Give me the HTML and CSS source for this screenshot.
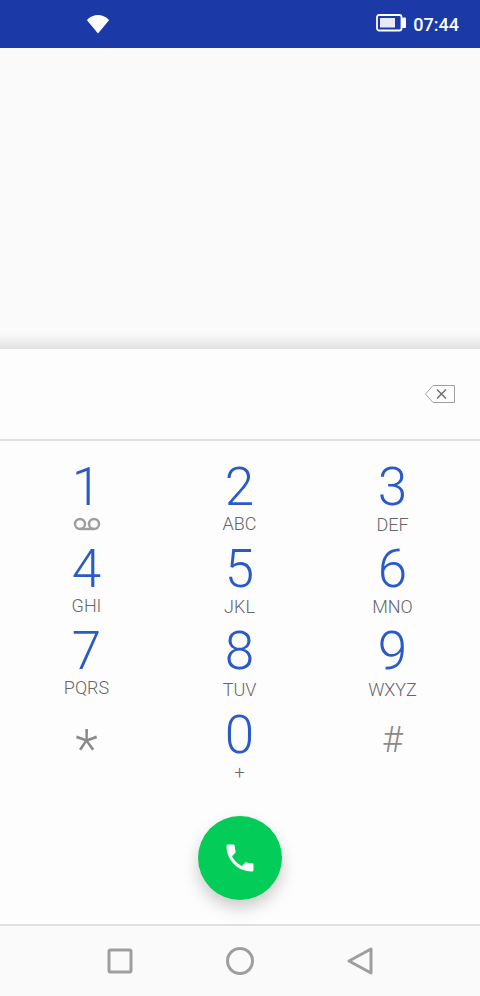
FILE: index.html
```html
<!DOCTYPE html>
<html lang="en">
  <head>
    <meta charset="UTF-8" />
    <meta name="viewport" content="width=device-width, initial-scale=1.0" />
    <title>Phone</title>
    <link rel="stylesheet" href="styles.css">
  </head>
  <body>
    <div class="screen">
      <div class="status-bar">
        <svg class="wifi" width="24" height="20" viewBox="0 0 24 20">
          <path d="M12 19.5 L1.2 6.6 Q1 6 1.4 5.6 Q6 1 12 1 Q18 1 22.6 5.6 Q23 6 22.8 6.6 Z" fill="#fff" />
        </svg>
        <div class="status-right">
          <svg class="battery" width="30" height="18" viewBox="0 0 30 18">
            <rect x="1" y="1" width="24.5" height="15.5" rx="2" fill="none" stroke="#fff" stroke-width="1.8" />
            <rect x="4" y="4" width="15" height="9.5" fill="#e8ebf6" />
            <rect x="26" y="3.5" width="4" height="10.5" rx="1" fill="#fff" />
          </svg>
          <span class="clock">07:44</span>
        </div>
      </div>

      <div class="call-log"></div>

      <div class="dialer">
        <div class="number-row">
          <svg class="backspace" width="32" height="20" viewBox="0 0 32 20">
            <path d="M9 1.5 H30.5 V18.5 H9 L1.5 10 Z" fill="none" stroke="#a0a0a0" stroke-width="1" />
            <path d="M13 5.5 L22 14.5 M22 5.5 L13 14.5" stroke="#6e6e6e" stroke-width="1.5" />
          </svg>
        </div>

        <div class="keypad">
          <div class="key">
            <span class="digit">1</span>
            <svg class="voicemail" width="28" height="14" viewBox="0 0 28 14">
              <circle cx="7" cy="7" r="5" fill="none" stroke="#9e9e9e" stroke-width="2.4" />
              <circle cx="21" cy="7" r="5" fill="none" stroke="#9e9e9e" stroke-width="2.4" />
              <path d="M7 12 H21" stroke="#9e9e9e" stroke-width="2.4" />
            </svg>
          </div>
          <div class="key"><span class="digit">2</span><span class="letters">ABC</span></div>
          <div class="key"><span class="digit">3</span><span class="letters low">DEF</span></div>
          <div class="key"><span class="digit">4</span><span class="letters">GHI</span></div>
          <div class="key"><span class="digit">5</span><span class="letters low">JKL</span></div>
          <div class="key"><span class="digit">6</span><span class="letters low">MNO</span></div>
          <div class="key"><span class="digit">7</span><span class="letters">PQRS</span></div>
          <div class="key"><span class="digit">8</span><span class="letters lower">TUV</span></div>
          <div class="key"><span class="digit">9</span><span class="letters lower">WXYZ</span></div>
          <div class="key"><span class="digit symbol star">*</span></div>
          <div class="key"><span class="digit zero">0</span><span class="letters plus">+</span></div>
          <div class="key"><span class="digit symbol hash">#</span></div>
        </div>

        <div class="call-row">
          <div class="call-btn">
            <svg width="36" height="36" viewBox="0 0 24 24">
              <path d="M6.62 10.79c1.44 2.83 3.76 5.14 6.59 6.59l2.2-2.2c.27-.27.67-.36 1.02-.24 1.12.37 2.33.57 3.57.57.55 0 1 .45 1 1V20c0 .55-.45 1-1 1-9.39 0-17-7.61-17-17 0-.55.45-1 1-1h3.5c.55 0 1 .45 1 1 0 1.25.2 2.45.57 3.57.11.35.03.74-.25 1.02l-2.2 2.2z" fill="#fff" />
            </svg>
          </div>
        </div>
      </div>

      <div class="nav-bar">
        <svg width="28" height="28" viewBox="0 0 28 28">
          <rect x="3" y="3" width="22" height="22" rx="1.5" fill="none" stroke="#9e9e9e" stroke-width="3" />
        </svg>
        <svg width="30" height="30" viewBox="0 0 30 30">
          <circle cx="15" cy="15" r="12.5" fill="none" stroke="#9e9e9e" stroke-width="3" />
        </svg>
        <svg width="28" height="30" viewBox="0 0 28 30">
          <path d="M3 15 L25 3 V27 Z" fill="none" stroke="#9e9e9e" stroke-width="3" stroke-linejoin="round" />
        </svg>
      </div>
    </div>
  </body>
</html>
```

FILE: styles.css
```css
* {
  margin: 0;
  padding: 0;
  box-sizing: border-box;
}

body {
  background-color: #fafafa;
  font-family: Roboto, "Liberation Sans", sans-serif;
}

.screen {
  width: 480px;
  height: 996px;
  display: flex;
  flex-direction: column;
  overflow: hidden;
}

.status-bar {
  height: 48px;
  flex-shrink: 0;
  background-color: #1c39a8;
  display: flex;
  align-items: center;
  justify-content: space-between;
  padding: 0 21px 0 86px;
}

.wifi {
  margin-bottom: 1px;
}

.status-right {
  display: flex;
  align-items: center;
  gap: 7px;
}

.battery {
  margin-bottom: 2px;
}

.clock {
  color: white;
  font-size: 18px;
  font-weight: 500;
}

.call-log {
  height: 301px;
  flex-shrink: 0;
  background: linear-gradient(to bottom, #fafafa 95%, #e2e2e2 100%);
}

.dialer {
  flex: 1;
  background-color: #fdfdfd;
  display: flex;
  flex-direction: column;
}

.number-row {
  height: 92px;
  border-bottom: 2px solid #e0e0e0;
  display: flex;
  align-items: center;
  justify-content: flex-end;
  padding: 0 24px 0 0;
}

.keypad {
  display: grid;
  grid-template-columns: repeat(3, 153px);
  grid-auto-rows: 82px;
  padding: 15px 0 0 10px;
}

.key {
  display: flex;
  flex-direction: column;
  align-items: center;
}

.digit {
  font-size: 53px;
  font-weight: 300;
  line-height: 54px;
  margin-top: 4px;
  color: #2a5ac8;
}

.symbol {
  color: #8a8a8a;
}

.star {
  margin-top: 20px;
}

.hash {
  font-size: 36px;
  margin-top: 11px;
}

.zero {
  margin-top: 6px;
}

.letters {
  font-size: 18px;
  font-weight: 300;
  line-height: 20px;
  color: #666;
}

.low {
  margin-top: 1px;
}

.lower {
  margin-top: 2px;
}

.plus {
  margin-top: 1px;
}

.voicemail {
  margin-top: 3px;
}

.call-row {
  display: flex;
  justify-content: center;
  margin-top: 32px;
}

.call-btn {
  width: 84px;
  height: 84px;
  border-radius: 50%;
  background-color: #04cc59;
  box-shadow: 0 8px 16px rgba(0, 0, 0, 0.2);
  display: flex;
  align-items: center;
  justify-content: center;
}

.nav-bar {
  height: 72px;
  flex-shrink: 0;
  background-color: #fafafa;
  border-top: 2px solid #e0e0e0;
  display: flex;
  align-items: center;
  justify-content: space-between;
  padding: 0 106px;
}
```
